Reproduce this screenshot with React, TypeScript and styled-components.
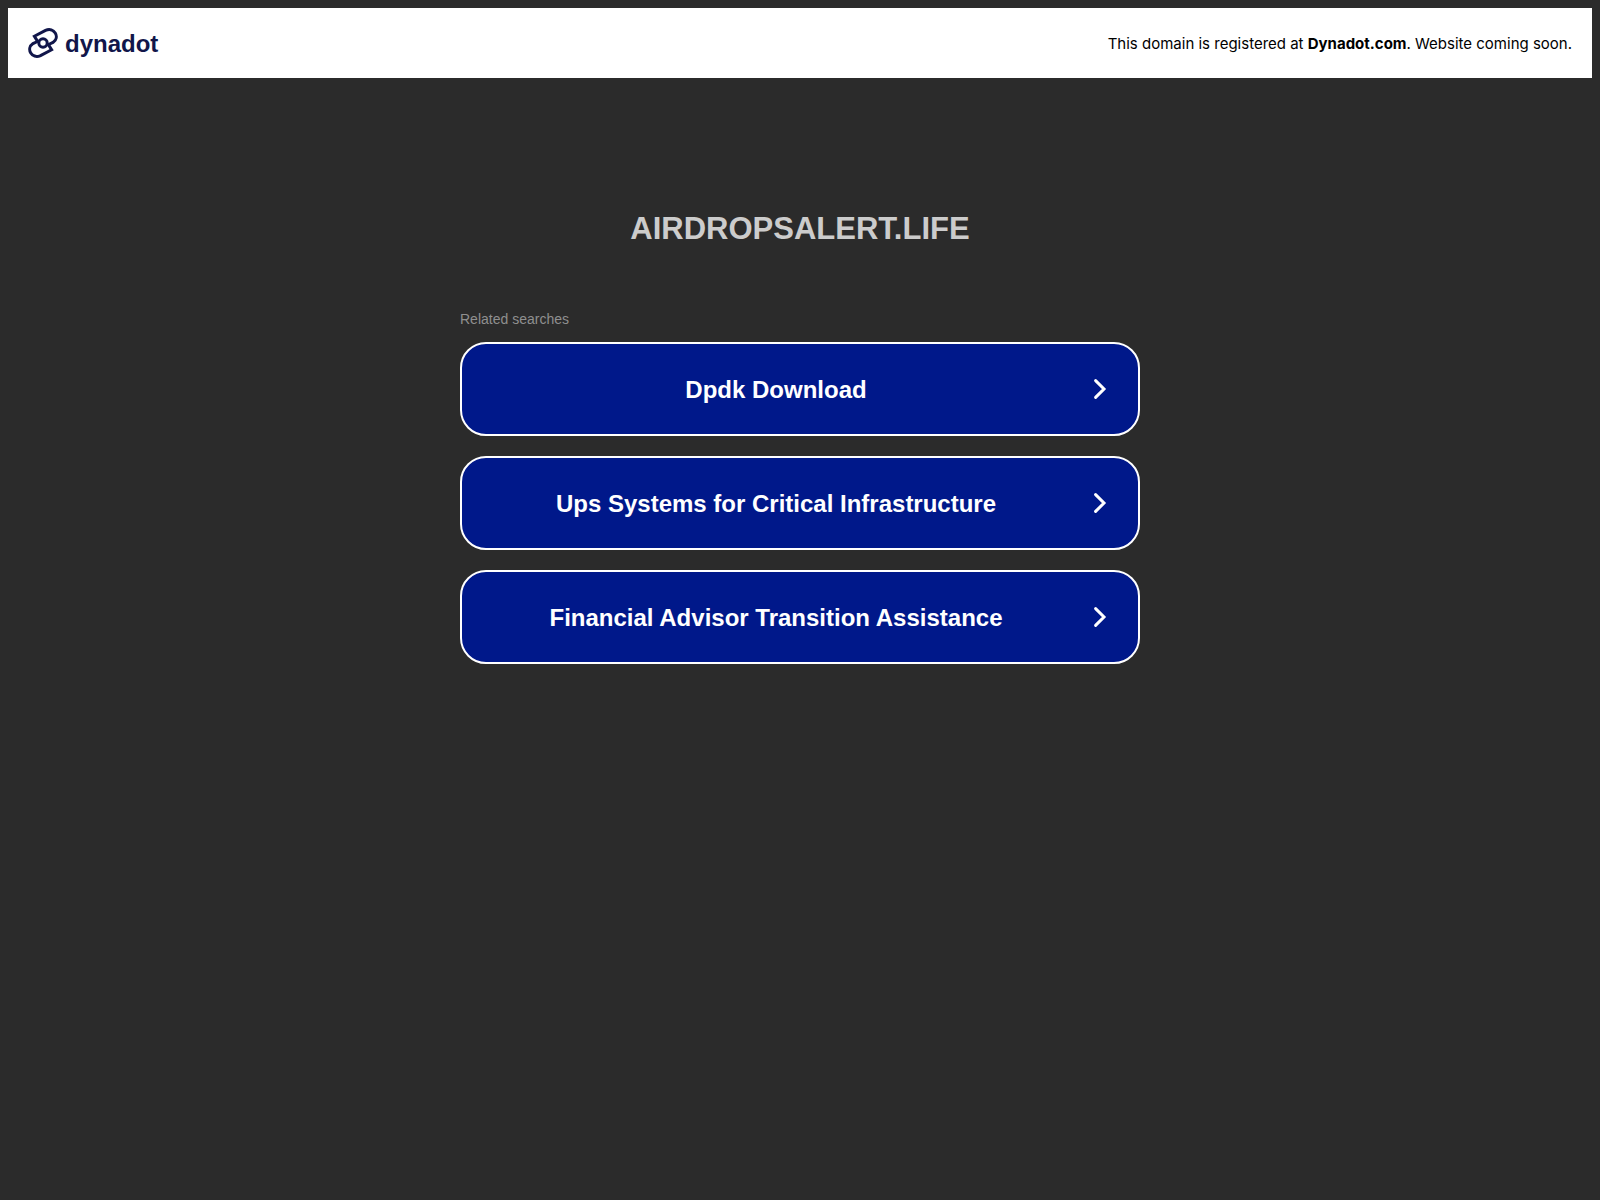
import React from "react";
import styled, { createGlobalStyle } from "styled-components";

const GlobalStyle = createGlobalStyle`
  *, *::before, *::after {
    box-sizing: border-box;
  }
  body {
    margin: 0;
    padding: 8px;
    background: #2b2b2b;
    font-family: Arial, "Liberation Sans", sans-serif;
  }
`;

const Header = styled.header`
  display: flex;
  align-items: center;
  justify-content: space-between;
  min-height: 70px;
  padding: 0 20px;
  background: #fff;
`;

const Brand = styled.a`
  display: flex;
  align-items: center;
  gap: 7px;
  color: #11164a;
  font-size: 24px;
  line-height: 30px;
  font-weight: 700;
  text-decoration: none;
`;

const BrandName = styled.span`
  padding-top: 2px;
`;

const Notice = styled.p`
  margin: 0;
  padding-top: 2px;
  color: #000;
  font-family: Inter, "Liberation Sans", sans-serif;
  font-size: 15px;
  line-height: 20px;
`;

const NoticeLink = styled.a`
  color: inherit;
  font-weight: 700;
  text-decoration: none;
`;

const Main = styled.main`
  display: flex;
  flex-direction: column;
  max-width: 680px;
  margin: 130px auto 0;
`;

const Title = styled.h1`
  margin: 0;
  color: #ccc;
  font-size: 31px;
  line-height: 42px;
  font-weight: 700;
  text-align: center;
  text-transform: uppercase;
`;

const Label = styled.h2`
  margin: 60px 0 14px;
  color: #8f8f8f;
  font-size: 14px;
  line-height: 18px;
  font-weight: 400;
`;

const Searches = styled.nav`
  display: flex;
  flex-direction: column;
  gap: 20px;
`;

const SearchLink = styled.a`
  display: flex;
  align-items: center;
  min-height: 94px;
  padding: 0 30px;
  border: 2px solid #fff;
  border-radius: 26px;
  background: #00188a;
  color: #fff;
  font-size: 24px;
  line-height: 30px;
  font-weight: 700;
  text-align: center;
  text-decoration: none;
`;

const SearchText = styled.span`
  flex: 1;
  padding: 2px 32px 0 0;
`;

const Chevron = styled.svg`
  flex: none;
  width: 16px;
  height: 24px;
`;

const searches = [
  "Dpdk Download",
  "Ups Systems for Critical Infrastructure",
  "Financial Advisor Transition Assistance",
];

const Logo = () => (
  <svg width="30" height="30" viewBox="0 0 30 30" fill="none" stroke="currentColor" strokeWidth="3" aria-hidden="true">
    <path d="M9.8 13.6 L6.4 8.3 L17.5 2.4 C26 -1.6 32.5 9.4 25 14.4 L19.5 17" />
    <path d="M20.2 16.4 L23.6 21.7 L12.5 27.6 C4 31.6 -2.5 20.6 5 15.6 L10.5 13" />
    <circle cx="15" cy="15" r="4.2" />
  </svg>
);

export default function App() {
  return (
    <>
      <GlobalStyle />
      <Header>
        <Brand href="#">
          <Logo />
          <BrandName>dynadot</BrandName>
        </Brand>
        <Notice>
          This domain is registered at <NoticeLink href="#">Dynadot.com</NoticeLink>. Website coming soon.
        </Notice>
      </Header>
      <Main>
        <Title>airdropsalert.life</Title>
        <Label>Related searches</Label>
        <Searches aria-label="Related searches">
          {searches.map((text) => (
            <SearchLink href="#" key={text}>
              <SearchText>{text}</SearchText>
              <Chevron viewBox="0 0 16 24" aria-hidden="true">
                <path d="M3.6 3.6 L12 12 L3.6 20.4" fill="none" stroke="#fff" strokeWidth="3" strokeLinecap="round" />
              </Chevron>
            </SearchLink>
          ))}
        </Searches>
      </Main>
    </>
  );
}
